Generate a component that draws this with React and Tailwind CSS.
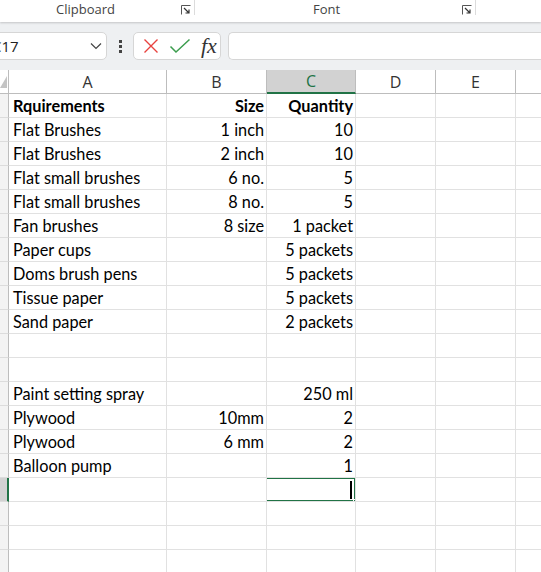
import React from "react";

const rows = [
  ["Rquirements", "Size", "Quantity", true],
  ["Flat Brushes", "1 inch", "10"],
  ["Flat Brushes", "2 inch", "10"],
  ["Flat small brushes", "6 no.", "5"],
  ["Flat small brushes", "8 no.", "5"],
  ["Fan brushes", "8 size", "1 packet"],
  ["Paper cups", "", "5 packets"],
  ["Doms brush pens", "", "5 packets"],
  ["Tissue paper", "", "5 packets"],
  ["Sand paper", "", "2 packets"],
  ["", "", ""],
  ["", "", ""],
  ["Paint setting spray", "", "250 ml"],
  ["Plywood", "10mm", "2"],
  ["Plywood", "6 mm", "2"],
  ["Balloon pump", "", "1"],
  ["", "", "", false, true],
  ["", "", ""],
  ["", "", ""],
  ["", "", ""],
];

function Launcher() {
  return (
    <svg width="10" height="10" viewBox="0 0 10 10" className="block">
      <path d="M0.5 9.5V0.5H9.5" fill="none" stroke="#555" strokeWidth="1" />
      <path d="M3 3L8 8M8 4.5V8H4.5" fill="none" stroke="#333" strokeWidth="1.2" />
    </svg>
  );
}

export default function App() {
  const cell = "h-[24px] pt-[1px] border-r border-b border-[#e1e1e1] flex items-center overflow-hidden whitespace-nowrap";
  return (
    <div className="w-[541px] h-[572px] overflow-hidden bg-white" style={{ fontFamily: "Lato, 'Open Sans', sans-serif" }}>
      {/* ribbon group labels */}
      <div className="relative z-10 h-[22px] bg-white flex text-[13px] text-[#444] shadow-[0_1px_2px_rgba(0,0,0,0.18)]" style={{ fontFamily: "'Open Sans', 'Noto Sans', sans-serif" }}>
        <div className="w-[194px] h-[22px] flex items-start">
          <span className="ml-[56px] w-[100px] leading-[18px]">Clipboard</span>
          <span className="ml-[25px] mt-[5px]"><Launcher /></span>
        </div>
        <div className="w-px h-[15px] bg-[#dcdcdc]" />
        <div className="w-[280px] h-[22px] flex items-start">
          <span className="ml-[118px] w-[140px] leading-[18px]">Font</span>
          <span className="ml-[9px] mt-[5px]"><Launcher /></span>
        </div>
        <div className="w-px h-[15px] bg-[#dcdcdc]" />
      </div>

      {/* formula bar area */}
      <div className="h-[48px] bg-[#eef0f2] flex items-center">
        <div className="ml-[-30px] w-[137px] h-[28px] bg-white border border-[#d6d6d6] rounded-[5px] flex items-center pl-[21px] pr-[4px]">
          <span className="text-[15px] text-[#222] flex-1" style={{ fontFamily: "'Open Sans', 'Noto Sans', sans-serif" }}>C17</span>
          <svg width="12" height="8" viewBox="0 0 12 8"><path d="M1 1.5L6 6.5L11 1.5" fill="none" stroke="#444" strokeWidth="1.2" /></svg>
        </div>
        <div className="w-[26px] flex flex-col items-center gap-[2px]">
          <div className="w-[3px] h-[3px] bg-[#444]" />
          <div className="w-[3px] h-[3px] bg-[#444]" />
          <div className="w-[3px] h-[3px] bg-[#444]" />
        </div>
        <div className="w-[88px] h-[28px] bg-white border border-[#d6d6d6] rounded-[5px] flex items-center pl-[9px]">
          <svg width="16" height="16" viewBox="0 0 16 16"><path d="M1.5 1.5L14.5 14.5M14.5 1.5L1.5 14.5" stroke="#e8423f" strokeWidth="1.4" fill="none" /></svg>
          <svg width="22" height="16" viewBox="0 0 22 16" className="ml-[10px]"><path d="M1.5 8.5L7 14L20.5 1.5" stroke="#3c9d4e" strokeWidth="1.5" fill="none" /></svg>
          <span className="ml-[10px] text-[22px] italic text-[#333] leading-none" style={{ fontFamily: "'Liberation Serif', 'DejaVu Serif', serif" }}>fx</span>
        </div>
        <div className="ml-[7px] flex-1 h-[28px] bg-white border border-[#d6d6d6] rounded-l-[5px] border-r-0" />
      </div>

      {/* column headers */}
      <div className="grid grid-cols-[9px_158px_100px_89px_80px_80px_1fr] h-[24px] text-[16px] text-[#333]" style={{ fontFamily: "'Open Sans', 'Noto Sans', sans-serif" }}>
        <div className="relative h-[24px] border-r border-b border-[#bdbdbd] bg-white">
          <div className="absolute left-0 top-[6px] w-0 h-0 border-l-[7px] border-l-transparent border-b-[12px] border-b-[#c4c4c4]" />
        </div>
        <div className="h-[24px] border-r border-b border-[#bdbdbd] flex items-center justify-center">A</div>
        <div className="h-[24px] border-r border-b border-[#bdbdbd] flex items-center justify-center">B</div>
        <div className="h-[24px] border-r border-[#bdbdbd] border-b-2 border-b-[#217346] bg-[#d2d2d2] flex items-center justify-center text-[#217346]">C</div>
        <div className="h-[24px] border-r border-b border-[#bdbdbd] flex items-center justify-center">D</div>
        <div className="h-[24px] border-r border-b border-[#bdbdbd] flex items-center justify-center">E</div>
        <div className="h-[24px] border-b border-[#bdbdbd]" />
      </div>

      {/* rows */}
      {rows.map((r, i) => {
        const [a, b, c, bold, sel] = r;
        const fw = bold ? "font-bold" : "";
        return (
          <div key={i} className="grid grid-cols-[9px_158px_100px_89px_80px_80px_1fr] text-[16.3px] text-black">
            <div className={"h-[24px] border-b border-[#dcdcdc] " + (sel ? "bg-[#d2d2d2] border-r-2 border-r-[#217346]" : "bg-[#f3f3f3] border-r border-r-[#bdbdbd]")} />
            <div className={cell + " pl-[4px] " + fw}>{a}</div>
            <div className={cell + " justify-end pr-[2px] " + fw}>{b}</div>
            <div className={cell + " relative justify-end pr-[2px] " + fw}>
              {c}
              {sel && (
                <div className="absolute left-[-2px] top-[-1px] w-[91px] h-[25px] border-2 border-[#217346]">
                  <div className="absolute right-[2px] top-[2px] w-[2px] h-[18px] bg-black" />
                  <div className="absolute right-[-5px] bottom-[-5px] w-[6px] h-[6px] bg-[#217346] border border-white" />
                </div>
              )}
            </div>
            <div className={cell} />
            <div className={cell} />
            <div className="h-[24px] border-b border-[#e1e1e1]" />
          </div>
        );
      })}
    </div>
  );
}
